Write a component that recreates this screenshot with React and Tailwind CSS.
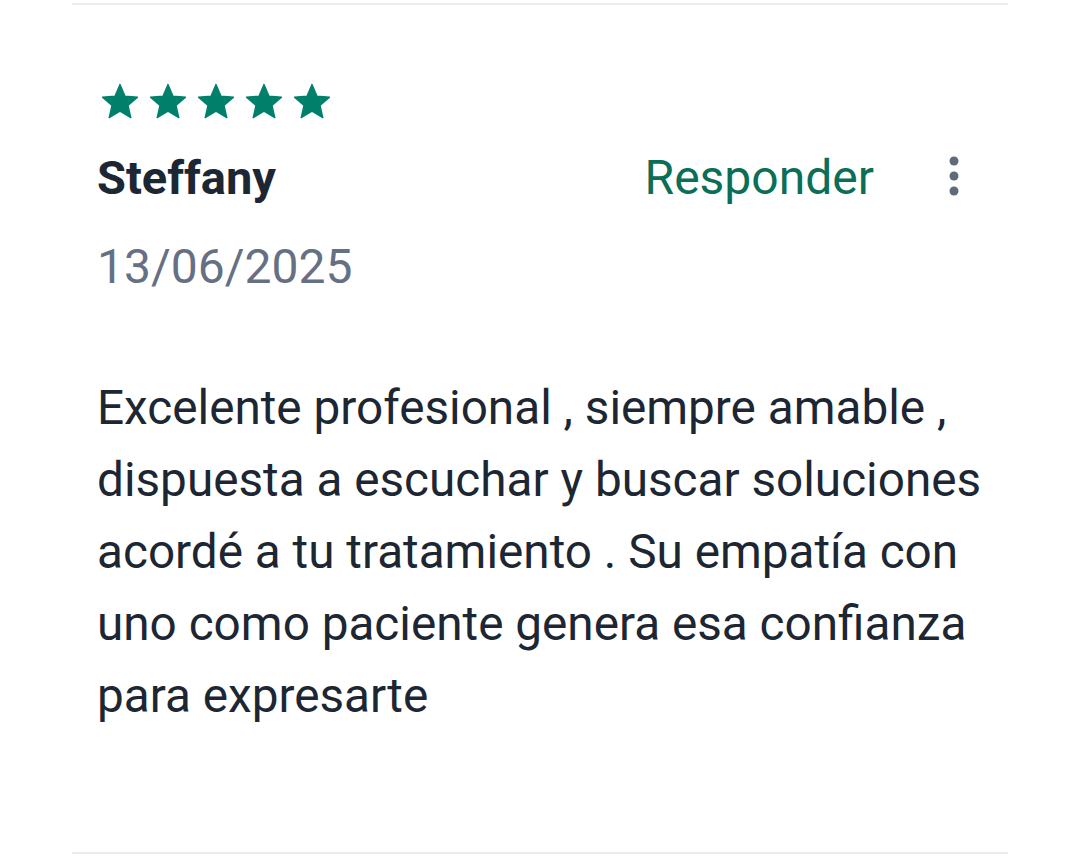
const STAR_PATH =
  'M12 17.27L18.18 21l-1.64-7.03L22 9.24l-7.19-.61L12 2 9.19 8.63 2 9.24l5.46 4.73L5.82 21z';

function Star() {
  return (
    <svg viewBox="0 0 24 24" className="w-[42px] h-[42px] shrink-0" aria-hidden="true">
      <path d={STAR_PATH} fill="#00806a" stroke="#00806a" strokeWidth="0.8" strokeLinejoin="round" />
    </svg>
  );
}

function MoreIcon() {
  return (
    <svg viewBox="0 0 12 40" className="w-[12px] h-[40px]" aria-hidden="true">
      <circle cx="6" cy="5" r="4.5" fill="#5f6b7a" />
      <circle cx="6" cy="20" r="4.5" fill="#5f6b7a" />
      <circle cx="6" cy="35" r="4.5" fill="#5f6b7a" />
    </svg>
  );
}

const BODY = [
  'Excelente profesional , siempre amable ,',
  'dispuesta a escuchar y buscar soluciones',
  'acordé a tu tratamiento . Su empatía con',
  'uno como paciente genera esa confianza',
  'para expresarte',
];

export default function App() {
  return (
    <div className="min-h-[859px] bg-white pt-[3px] font-['Roboto',_'Liberation_Sans',_sans-serif]">
      <div className="mx-[72px] border-y-2 border-[#ebebeb] pl-[25px] pr-[48px] pt-[76px] pb-[120px]">
        {/* stars */}
        <div className="flex gap-[6px] ml-[2px]">
          {[0, 1, 2, 3, 4].map((i) => (
            <Star key={i} />
          ))}
        </div>

        {/* header */}
        <div className="mt-[27px] flex items-start">
          <p className="flex-1 text-[47px] leading-[56px] font-bold text-[#1d2633]">Steffany</p>
          <button className="text-[48px] leading-[56px] text-[#0b6e57]">Responder</button>
          <div className="ml-[74px] mt-[6px]">
            <MoreIcon />
          </div>
        </div>

        <p className="mt-[33px] text-[48px] leading-[56px] text-[#667085]">13/06/2025</p>

        <p className="mt-[77px] text-[47.7px] leading-[72px] text-[#1d2633] whitespace-nowrap">
          {BODY.map((line, i) => (
            <span key={i}>
              {line}
              {i < BODY.length - 1 && <br />}
            </span>
          ))}
        </p>
      </div>
    </div>
  );
}
